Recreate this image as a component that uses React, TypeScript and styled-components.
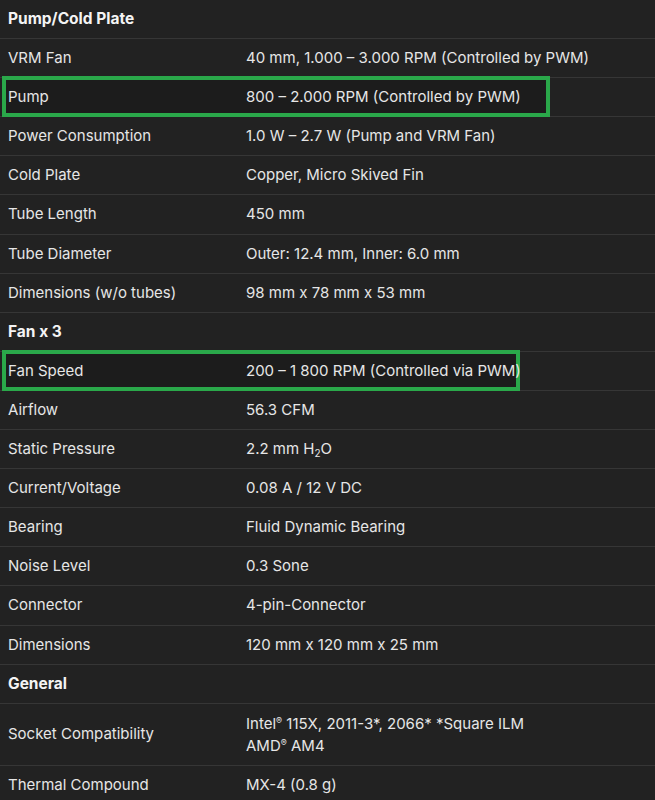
import React from "react";
import styled, { createGlobalStyle } from "styled-components";

const Global = createGlobalStyle`
  html, body { margin: 0; padding: 0; background: #222222; }
  body { font-family: Inter, "Open Sans", sans-serif; color: #e6e6e6; }
`;

const Table = styled.div`
  width: 655px;
  background: #222222;
  display: flex;
  flex-direction: column;
`;

const Row = styled.div`
  position: relative;
  display: grid;
  grid-template-columns: 238px 1fr;
  align-items: center;
  border-bottom: 1px solid #363636;
  padding: 8px 0;
  min-height: 22px;
`;

const Label = styled.div<{ $head?: boolean }>`
  position: relative;
  z-index: 1;
  padding-left: 8px;
  font-size: ${(p) => (p.$head ? "15.5px" : "15px")};
  line-height: 22.1px;
  font-weight: ${(p) => (p.$head ? 700 : 400)};
  color: ${(p) => (p.$head ? "#f4f4f4" : "#e6e6e6")};
`;

const Value = styled.div<{ $tall?: boolean }>`
  position: relative;
  z-index: 1;
  padding-left: 8px;
  font-size: 15px;
  line-height: ${(p) => (p.$tall ? "22.5px" : "22.1px")};
  top: ${(p) => (p.$tall ? "1px" : "0")};
`;

const Highlight = styled.div`
  position: absolute;
  z-index: 0;
  left: 2px;
  top: -2px;
  bottom: -1px;
  border: 4px solid #2aa84a;
  background: #1c1c1c;
  pointer-events: none;
  box-sizing: border-box;
`;

const Reg = styled.sup`
  font-size: 9px;
  vertical-align: 5px;
  line-height: 0;
`;

const Sub = styled.sub`
  font-size: 10px;
  vertical-align: -3px;
  line-height: 0;
`;

type Item = {
  label: string;
  value?: React.ReactNode;
  head?: boolean;
  hl?: number;
  tall?: boolean;
};

const items: Item[] = [
  { label: "Pump/Cold Plate", head: true },
  { label: "VRM Fan", value: "40 mm, 1.000 – 3.000 RPM (Controlled by PWM)" },
  { label: "Pump", value: "800 – 2.000 RPM (Controlled by PWM)", hl: 548 },
  { label: "Power Consumption", value: "1.0 W – 2.7 W (Pump and VRM Fan)" },
  { label: "Cold Plate", value: "Copper, Micro Skived Fin" },
  { label: "Tube Length", value: "450 mm" },
  { label: "Tube Diameter", value: "Outer: 12.4 mm, Inner: 6.0 mm" },
  { label: "Dimensions (w/o tubes)", value: "98 mm x 78 mm x 53 mm" },
  { label: "Fan x 3", head: true },
  { label: "Fan Speed", value: "200 – 1 800 RPM (Controlled via PWM)", hl: 518 },
  { label: "Airflow", value: "56.3 CFM" },
  {
    label: "Static Pressure",
    value: (
      <>
        2.2 mm H<Sub>2</Sub>O
      </>
    ),
  },
  { label: "Current/Voltage", value: "0.08 A / 12 V DC" },
  { label: "Bearing", value: "Fluid Dynamic Bearing" },
  { label: "Noise Level", value: "0.3 Sone" },
  { label: "Connector", value: "4-pin-Connector" },
  { label: "Dimensions", value: "120 mm x 120 mm x 25 mm" },
  { label: "General", head: true },
  {
    label: "Socket Compatibility",
    tall: true,
    value: (
      <>
        Intel<Reg>®</Reg> 115X, 2011-3*, 2066* *Square ILM
        <br />
        AMD<Reg>®</Reg> AM4
      </>
    ),
  },
  { label: "Thermal Compound", value: "MX-4 (0.8 g)" },
];

export default function App() {
  return (
    <>
      <Global />
      <Table>
        {items.map((it, i) => (
          <Row key={i}>
            {it.hl ? <Highlight style={{ width: it.hl }} /> : null}
            <Label $head={it.head}>{it.label}</Label>
            <Value $tall={it.tall}>{it.value}</Value>
          </Row>
        ))}
      </Table>
    </>
  );
}
